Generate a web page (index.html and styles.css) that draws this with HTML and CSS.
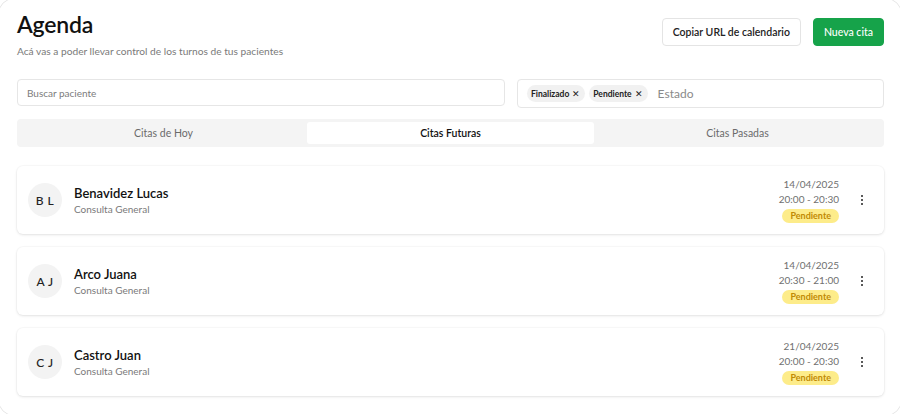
FILE: index.html
```html
<!DOCTYPE html>
<html lang="es">
  <head>
    <meta charset="UTF-8" />
    <meta name="viewport" content="width=device-width, initial-scale=1.0" />
    <title>Agenda</title>
    <link rel="stylesheet" href="styles.css">
  </head>
  <body>
    <main class="page">
      <header class="header">
        <div class="header__text">
          <h1 class="header__title">Agenda</h1>
          <p class="header__sub">Acá vas a poder llevar control de los turnos de tus pacientes</p>
        </div>
        <div class="header__actions">
          <button class="btn btn--light">Copiar URL de calendario</button>
          <button class="btn btn--green">Nueva cita</button>
        </div>
      </header>

      <div class="filters">
        <div class="field field--search">Buscar paciente</div>
        <div class="field field--status">
          <span class="chip">Finalizado <span class="chip__x">✕</span></span>
          <span class="chip">Pendiente <span class="chip__x">✕</span></span>
          <span class="field__placeholder">Estado</span>
        </div>
      </div>

      <nav class="tabs">
        <div class="tab">Citas de Hoy</div>
        <div class="tab tab--active">Citas Futuras</div>
        <div class="tab">Citas Pasadas</div>
      </nav>

      <section class="list">
        <article class="appt">
          <div class="appt__avatar">B L</div>
          <div class="appt__info">
            <h3 class="appt__name">Benavidez Lucas</h3>
            <p class="appt__type">Consulta General</p>
          </div>
          <div class="appt__when">
            <span>14/04/2025</span>
            <span>20:00 - 20:30</span>
            <span class="badge">Pendiente</span>
          </div>
          <div class="appt__menu"><i></i><i></i><i></i></div>
        </article>

        <article class="appt">
          <div class="appt__avatar">A J</div>
          <div class="appt__info">
            <h3 class="appt__name">Arco Juana</h3>
            <p class="appt__type">Consulta General</p>
          </div>
          <div class="appt__when">
            <span>14/04/2025</span>
            <span>20:30 - 21:00</span>
            <span class="badge">Pendiente</span>
          </div>
          <div class="appt__menu"><i></i><i></i><i></i></div>
        </article>

        <article class="appt">
          <div class="appt__avatar">C J</div>
          <div class="appt__info">
            <h3 class="appt__name">Castro Juan</h3>
            <p class="appt__type">Consulta General</p>
          </div>
          <div class="appt__when">
            <span>21/04/2025</span>
            <span>20:00 - 20:30</span>
            <span class="badge">Pendiente</span>
          </div>
          <div class="appt__menu"><i></i><i></i><i></i></div>
        </article>
      </section>
    </main>
  </body>
</html>
```

FILE: styles.css
```css
* {
  margin: 0;
  padding: 0;
  box-sizing: border-box;
}

body {
  font-family: Lato, 'Noto Sans', sans-serif;
  color: #111;
  background-color: #fff;
  width: 900px;
  height: 414px;
  overflow: hidden;
}

/* the outer card is a bit bigger than the window, only its corners show */
.page {
  margin: -2px;
  width: 904px;
  height: 418px;
  border: 1px solid #e6e6e6;
  border-radius: 16px;
  padding: 12px 17px 0 18px;
}

/* header */
.header {
  display: flex;
  justify-content: space-between;
  align-items: flex-start;
  height: 68px;
}

.header__title {
  font-size: 23px;
  font-weight: 600;
  line-height: 26px;
  letter-spacing: -0.2px;
}

.header__sub {
  margin-top: 8px;
  font-size: 10.2px;
  color: #7a7a7a;
}

.header__actions {
  display: flex;
  gap: 12px;
  margin-top: 7px;
}

.btn {
  height: 28px;
  border-radius: 4px;
  font-family: inherit;
  font-size: 10.5px;
  font-weight: 600;
  padding: 0 10px;
}

.btn--light {
  background: #fff;
  border: 1px solid #e4e4e4;
  color: #222;
}

.btn--green {
  background: #16a34a;
  border: 1px solid #16a34a;
  color: #fff;
  font-weight: 500;
  padding: 0 10px;
}

/* filters */
.filters {
  display: flex;
  gap: 12px;
}

.field {
  border: 1px solid #e6e6e6;
  border-radius: 4px;
  display: flex;
  align-items: center;
}

.field--search {
  flex: 0 0 488px;
  height: 27px;
  padding-left: 9px;
  font-size: 10px;
  color: #7c7c7c;
}

.field--status {
  flex: 1;
  height: 29px;
  padding-left: 9px;
  gap: 4px;
}

.chip {
  background: #f1f1f1;
  border-radius: 10px;
  font-size: 8.5px;
  font-weight: 700;
  color: #222;
  padding: 3px 5px 3px 4px;
  display: flex;
  align-items: center;
  gap: 3px;
}

.chip__x {
  font-size: 9px;
  font-weight: 400;
}

.field__placeholder {
  margin-left: 6px;
  font-size: 12px;
  color: #8a8a8a;
}

/* tabs */
.tabs {
  display: flex;
  margin-top: 11px;
  height: 28px;
  background: #f4f4f4;
  border-radius: 4px;
  padding: 3px;
}

.tab {
  flex: 1;
  display: flex;
  align-items: center;
  justify-content: center;
  font-size: 10.5px;
  color: #6b6b6b;
  border-radius: 3px;
}

.tab--active {
  background: #fff;
  color: #111;
  font-weight: 600;
}

/* list */
.list {
  margin-top: 19px;
  display: flex;
  flex-direction: column;
  gap: 13px;
}

.appt {
  height: 68px;
  border-radius: 6px;
  background: #fff;
  box-shadow: 0 1px 3px rgba(0, 0, 0, 0.1), 0 0 0 1px rgba(0, 0, 0, 0.02);
  display: flex;
  align-items: center;
  padding: 0 20px 0 11px;
}

.appt__avatar {
  width: 34px;
  height: 34px;
  border-radius: 50%;
  background: #f3f3f3;
  display: flex;
  align-items: center;
  justify-content: center;
  font-size: 12px;
  font-weight: 500;
  color: #222;
  letter-spacing: 0.5px;
}

.appt__info {
  flex: 1;
  margin-left: 12px;
}

.appt__name {
  font-size: 13px;
  font-weight: 600;
  line-height: 16px;
}

.appt__type {
  margin-top: 2px;
  font-size: 10px;
  color: #7a7a7a;
}

.appt__when {
  display: flex;
  flex-direction: column;
  align-items: flex-end;
  font-size: 10px;
  line-height: 15px;
  color: #707070;
}

.badge {
  margin-top: 2px;
  background: #fdec8a;
  color: #c08a05;
  font-size: 9px;
  font-weight: 700;
  line-height: 14px;
  padding: 0 8px;
  border-radius: 8px;
}

.appt__menu {
  margin-left: 21px;
  width: 4px;
  display: flex;
  flex-direction: column;
  align-items: center;
  gap: 1.5px;
}

.appt__menu i {
  width: 2.5px;
  height: 2.5px;
  border-radius: 50%;
  background: #222;
}
```
